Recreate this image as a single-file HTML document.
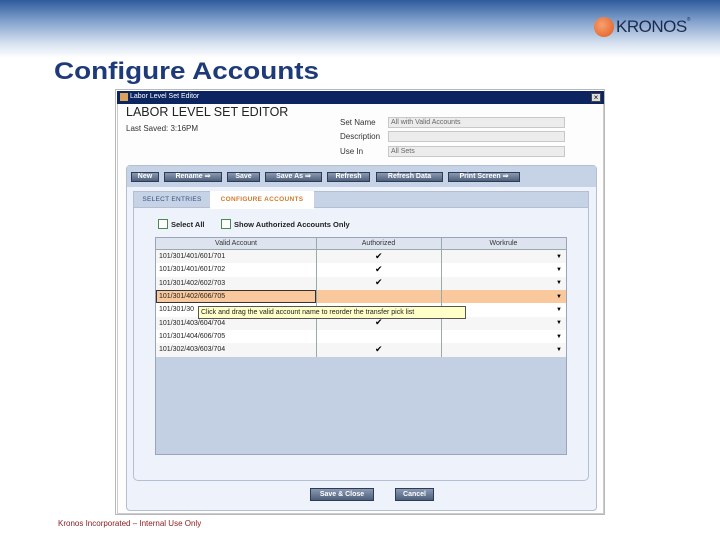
<!DOCTYPE html>
<html><head><style>
*{margin:0;padding:0;box-sizing:border-box}
body{width:720px;height:540px;position:relative;background:#fff;font-family:"Liberation Sans",sans-serif;overflow:hidden}
.a{position:absolute}
.btn{position:absolute;top:172px;height:10px;background:linear-gradient(#8a9ab2,#4e5f7c);border:1px solid #2d3b55;color:#fff;font-size:7px;font-weight:bold;line-height:8px;text-align:center}
.lbl{position:absolute;font-size:8px;color:#333}
.inp{position:absolute;left:388px;width:177px;height:11px;background:#ececec;border:1px solid #c8c8c8;font-size:7px;color:#666;padding-left:2px;line-height:9px}
.row{position:absolute;left:156px;width:410px;height:13.3px;font-size:7px;color:#222;line-height:13px;padding-left:3px}
.ck{position:absolute;left:375px;font-size:9px}
.dd{position:absolute;left:556px;font-size:6px}
</style></head><body>
<div class="a" style="left:0;top:0;width:720px;height:58px;background:linear-gradient(#2f5b9c 0%,#7f9fcb 35%,#d7e2f0 75%,#fff 100%)"></div>
<div class="a" style="left:594px;top:17px;width:20px;height:20px;border-radius:50%;background:radial-gradient(circle at 40% 40%,#f8a070,#e05a1c)"></div>
<div class="a" style="left:616px;top:17px;font-size:17px;color:#1c2a4c;letter-spacing:-0.5px">KRONOS<span style="font-size:5px;vertical-align:top">®</span></div>
<div class="a" style="left:54px;top:58px;font-size:24px;font-weight:bold;color:#1f3a78;transform:scaleX(1.16);transform-origin:0 0;white-space:nowrap">Configure Accounts</div>

<div class="a" style="left:115px;top:89px;width:490px;height:426px;border:1px solid #b8b8b8;background:#fff"></div>
<div class="a" style="left:117px;top:91px;width:487px;height:423px;border:1px solid #ccc;background:#fdfdfd"></div>
<div class="a" style="left:117px;top:91px;width:487px;height:13px;background:#0c2460"></div>
<div class="a" style="left:120px;top:93px;width:8px;height:8px;background:#d9a35a"></div>
<div class="a" style="left:130px;top:93px;font-size:7px;color:#fff">Labor Level Set Editor</div>
<div class="a" style="left:591px;top:93px;width:10px;height:9px;background:#ddd;border:1px solid #444;font-size:8px;line-height:7px;text-align:center">×</div>
<div class="a" style="left:126px;top:105px;font-size:12.5px;color:#222">LABOR LEVEL SET EDITOR</div>
<div class="a" style="left:126px;top:124px;font-size:8px;color:#333">Last Saved: 3:16PM</div>
<div class="lbl" style="left:340px;top:118px">Set Name</div>
<div class="lbl" style="left:340px;top:132px">Description</div>
<div class="lbl" style="left:340px;top:147px">Use In</div>
<div class="inp" style="top:117px">All with Valid Accounts</div>
<div class="inp" style="top:131px"></div>
<div class="inp" style="top:146px">All Sets</div>

<div class="a" style="left:126px;top:165px;width:471px;height:346px;background:#eef2fb;border:1px solid #b5bfd0;border-radius:4px"></div>
<div class="a" style="left:127px;top:166px;width:469px;height:21px;background:#c6d3e6"></div>
<div class="btn" style="left:131px;width:28px">New</div>
<div class="btn" style="left:164px;width:58px">Rename ⇒</div>
<div class="btn" style="left:227px;width:33px">Save</div>
<div class="btn" style="left:265px;width:57px">Save As ⇒</div>
<div class="btn" style="left:327px;width:43px">Refresh</div>
<div class="btn" style="left:376px;width:67px">Refresh Data</div>
<div class="btn" style="left:448px;width:72px">Print Screen ⇒</div>

<div class="a" style="left:133px;top:191px;width:456px;height:17px;background:#c6d3e6;border:1px solid #b5bfd0"></div>
<div class="a" style="left:134px;top:192px;width:76px;height:16px;font-size:6.5px;color:#3a4f78;line-height:16px;text-align:center;letter-spacing:.3px">SELECT ENTRIES</div>
<div class="a" style="left:210px;top:191px;width:104px;height:18px;background:#fff;font-size:6.5px;color:#d07a2a;line-height:18px;text-align:center;font-weight:bold;letter-spacing:.3px">CONFIGURE ACCOUNTS</div>
<div class="a" style="left:133px;top:208px;width:456px;height:273px;border:1px solid #b5bfd0;border-top:none;border-radius:0 0 5px 5px"></div>

<div class="a" style="left:158px;top:219px;width:10px;height:10px;border:1px solid #4a8a4a;background:#fff"></div>
<div class="a" style="left:171px;top:220px;font-size:7.5px;font-weight:bold;color:#222">Select All</div>
<div class="a" style="left:221px;top:219px;width:10px;height:10px;border:1px solid #4a8a4a;background:#fff"></div>
<div class="a" style="left:234px;top:220px;font-size:7.5px;font-weight:bold;color:#222">Show Authorized Accounts Only</div>

<div class="a" style="left:155px;top:237px;width:412px;height:218px;background:#c3d0e3;border:1px solid #9aa6b8"></div>
<div class="a" style="left:156px;top:238px;width:410px;height:12px;background:#dde4ef;border-bottom:1px solid #9aa"></div>
<div class="a" style="left:156px;top:238px;width:160px;font-size:7px;color:#333;text-align:center;line-height:12px">Valid Account</div>
<div class="a" style="left:316px;top:238px;width:125px;font-size:7px;color:#333;text-align:center;line-height:12px">Authorized</div>
<div class="a" style="left:441px;top:238px;width:125px;font-size:7px;color:#333;text-align:center;line-height:12px">Workrule</div>

<div class="row" style="top:250px;background:#f6f6f6">101/301/401/601/701</div>
<div class="row" style="top:263.3px;background:#fff">101/301/401/601/702</div>
<div class="row" style="top:276.6px;background:#f6f6f6">101/301/402/602/703</div>
<div class="row" style="top:290px;background:#f9c89c">101/301/402/606/705</div>
<div class="a" style="left:156px;top:290px;width:160px;height:13.3px;border:1px solid #333"></div>
<div class="row" style="top:303.3px;background:#fff">101/301/30</div>
<div class="row" style="top:316.6px;background:#f6f6f6">101/301/403/604/704</div>
<div class="row" style="top:330px;background:#fff">101/301/404/606/705</div>
<div class="row" style="top:343.3px;background:#f6f6f6">101/302/403/603/704</div>
<div class="a" style="left:316px;top:238px;width:1px;height:119px;background:#9aa"></div>
<div class="a" style="left:441px;top:238px;width:1px;height:119px;background:#9aa"></div>
<div class="ck" style="top:251px">✔</div><div class="ck" style="top:264px">✔</div><div class="ck" style="top:277px">✔</div><div class="ck" style="top:317px">✔</div><div class="ck" style="top:344px">✔</div>
<div class="dd" style="top:254px">▼</div><div class="dd" style="top:267px">▼</div><div class="dd" style="top:280px">▼</div><div class="dd" style="top:294px">▼</div><div class="dd" style="top:307px">▼</div><div class="dd" style="top:320px">▼</div><div class="dd" style="top:334px">▼</div><div class="dd" style="top:347px">▼</div>
<div class="a" style="left:198px;top:306px;width:268px;height:13px;background:#ffffc8;border:1px solid #555;font-size:7px;line-height:11px;padding-left:2px;color:#222">Click and drag the valid account name to reorder the transfer pick list</div>

<div class="a" style="left:310px;top:488px;width:64px;height:13px;background:linear-gradient(#8a9ab2,#4e5f7c);border:1px solid #2d3b55;color:#fff;font-size:7px;font-weight:bold;text-align:center;line-height:11px">Save &amp; Close</div>
<div class="a" style="left:395px;top:488px;width:39px;height:13px;background:linear-gradient(#8a9ab2,#4e5f7c);border:1px solid #2d3b55;color:#fff;font-size:7px;font-weight:bold;text-align:center;line-height:11px">Cancel</div>

<div class="a" style="left:58px;top:519px;font-size:8px;color:#8a1a1a">Kronos Incorporated – Internal Use Only</div>
</body></html>
